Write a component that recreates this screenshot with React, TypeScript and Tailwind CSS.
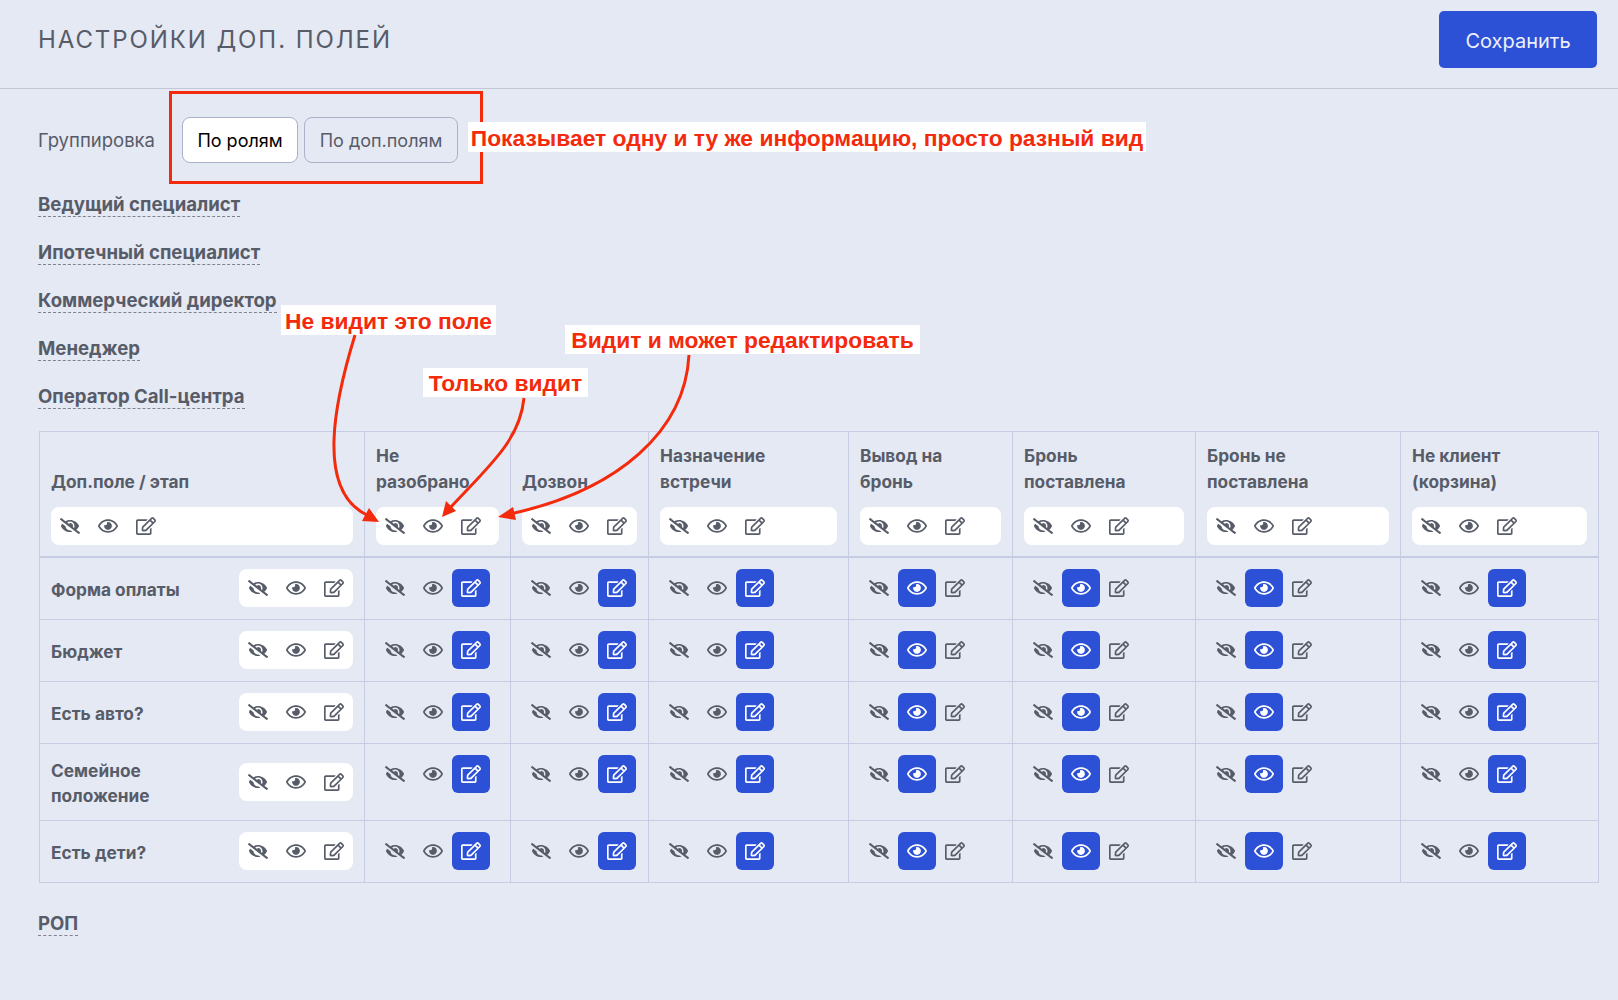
import { FaEyeSlash, FaRegEdit, FaRegEye } from "react-icons/fa";

const roles = ["Ведущий специалист", "Ипотечный специалист", "Коммерческий директор", "Менеджер", "Оператор Call-центра"];

// mode: 0 hidden, 1 view, 2 edit
const stages = [
  { title: ["Не", "разобрано"], mode: 2, width: "w-[146px]" },
  { title: ["Дозвон"], mode: 2, width: "w-[138px]" },
  { title: ["Назначение", "встречи"], mode: 2, width: "w-[200px]" },
  { title: ["Вывод на", "бронь"], mode: 1, width: "w-[164px]" },
  { title: ["Бронь", "поставлена"], mode: 1, width: "w-[183px]" },
  { title: ["Бронь не", "поставлена"], mode: 1, width: "w-[205px]" },
  { title: ["Не клиент", "(корзина)"], mode: 2, width: "w-[198px]" },
];

const fields = [["Форма оплаты"], ["Бюджет"], ["Есть авто?"], ["Семейное", "положение"], ["Есть дети?"]];

function IconButton({ active, children }: { active?: boolean; children: React.ReactNode }) {
  return (
    <span
      className={
        active
          ? "flex h-[38px] w-[38px] items-center justify-center rounded-[6px] bg-[#2c50d6] text-white"
          : "flex h-[38px] w-[38px] items-center justify-center rounded-[6px] text-[#575c68]"
      }
    >
      {children}
    </span>
  );
}

function Switcher({ mode, className }: { mode?: number; className?: string }) {
  return (
    <div className={`flex ${className ?? ""}`}>
      <IconButton active={mode === 0}>
        <FaEyeSlash size={20} />
      </IconButton>
      <IconButton active={mode === 1}>
        <FaRegEye size={20} />
      </IconButton>
      <IconButton active={mode === 2}>
        <FaRegEdit size={20} />
      </IconButton>
    </div>
  );
}

function Lines({ lines }: { lines: string[] }) {
  return (
    <>
      {lines.map((l) => (
        <div key={l}>{l}</div>
      ))}
    </>
  );
}

function Note({ className, children }: { className: string; children: string }) {
  return (
    <div
      className={`absolute flex items-center justify-center bg-white pt-[2px] font-['Liberation_Sans',sans-serif] text-[22.8px] font-bold whitespace-nowrap text-[#f32a0c] ${className}`}
    >
      {children}
    </div>
  );
}

export default function App() {
  return (
    <div className="relative min-h-screen bg-[#e5e9f4] font-['Inter',sans-serif] text-[#575c68]">
      <header className="flex h-[89px] items-center justify-between border-b border-[#c3c8d6] pr-[21px] pl-[38px]">
        <h1 className="mb-[8px] text-[24px] font-normal tracking-[0.08em]">НАСТРОЙКИ ДОП. ПОЛЕЙ</h1>
        <button className="mb-[9px] h-[57px] w-[158px] rounded-[5px] bg-[#2c50d6] pt-[2px] text-[20px] text-[#eef1fb]">Сохранить</button>
      </header>

      <main className="pt-[28px] pr-[21px] pl-[38px]">
        <div className="flex items-center">
          <span className="w-[144px] pt-[1px] text-[18.5px]">Группировка</span>
          <button className="h-[46px] w-[116px] rounded-[8px] border border-[#abb2c8] bg-white pt-[1px] text-[18px] text-black">По ролям</button>
          <button className="ml-[6px] h-[46px] w-[154px] rounded-[8px] border border-[#abb2c8] pt-[1px] text-[18px]">По доп.полям</button>
        </div>

        <div className="mt-[29px] flex flex-col items-start gap-[23px]">
          {roles.map((r) => (
            <span key={r} className="border-b border-dashed border-[#7d828e] text-[18.6px] leading-[24px] font-bold">
              {r}
            </span>
          ))}
        </div>

        <table className="mt-[22px] ml-[1px] w-[1558px] table-fixed border-collapse text-[17.3px] leading-[25.6px] font-bold">
          <colgroup>
            <col className="w-[325px]" />
            {stages.map((s) => (
              <col key={s.title.join()} className={s.width} />
            ))}
          </colgroup>
          <thead>
            <tr>
              <th className="border border-b-2 border-[#c6cde3] p-[11px] text-left align-bottom font-bold">
                <div className="mb-[13px]">Доп.поле / этап</div>
                <Switcher className="rounded-[8px] bg-white" />
              </th>
              {stages.map((s) => (
                <th key={s.title.join()} className="border border-b-2 border-[#c6cde3] p-[11px] text-left align-bottom font-bold">
                  <div className="mb-[13px]">
                    <Lines lines={s.title} />
                  </div>
                  <Switcher className="rounded-[8px] bg-white" />
                </th>
              ))}
            </tr>
          </thead>
          <tbody>
            {fields.map((f) => (
              <tr key={f.join()} className="h-[62px]">
                <td className="border border-[#c6cde3] p-[11px]">
                  <div className="flex items-center justify-between">
                    <div className="pt-[3px]">
                      <Lines lines={f} />
                    </div>
                    <Switcher className="rounded-[8px] bg-white" />
                  </div>
                </td>
                {stages.map((s) => (
                  <td key={s.title.join()} className="border border-[#c6cde3] p-[11px] align-top">
                    <Switcher mode={s.mode} />
                  </td>
                ))}
              </tr>
            ))}
          </tbody>
        </table>

        <div className="mt-[28px] flex">
          <span className="border-b border-dashed border-[#7d828e] text-[18.6px] leading-[24px] font-bold">РОП</span>
        </div>
      </main>

      {/* annotations drawn over the screen */}
      <div className="absolute top-[91px] left-[169px] h-[93px] w-[314px] border-[3px] border-[#f32a0c]" />
      <Note className="top-[122px] left-[468px] h-[30px] w-[678px]">Показывает одну и ту же информацию, просто разный вид</Note>
      <Note className="top-[305px] left-[281px] h-[30px] w-[215px]">Не видит это поле</Note>
      <Note className="top-[368px] left-[423px] h-[29px] w-[165px]">Только видит</Note>
      <Note className="top-[325px] left-[565px] h-[29px] w-[355px]">Видит и может редактировать</Note>

      <svg className="pointer-events-none absolute top-0 left-0 h-[1000px] w-[1618px]" viewBox="0 0 1618 1000" fill="none">
        <path d="M355 335C335 400 315 490 367 515" stroke="#f32a0c" strokeWidth="3" />
        <path d="M379 522L362 521L369 508Z" fill="#f32a0c" />
        <path d="M524 398C520 440 490 465 450 508" stroke="#f32a0c" strokeWidth="3" />
        <path d="M442 517L446 501L456 511Z" fill="#f32a0c" />
        <path d="M689 355C685 430 620 490 510 514" stroke="#f32a0c" strokeWidth="3" />
        <path d="M498 517L513 507L516 520Z" fill="#f32a0c" />
      </svg>
    </div>
  );
}
